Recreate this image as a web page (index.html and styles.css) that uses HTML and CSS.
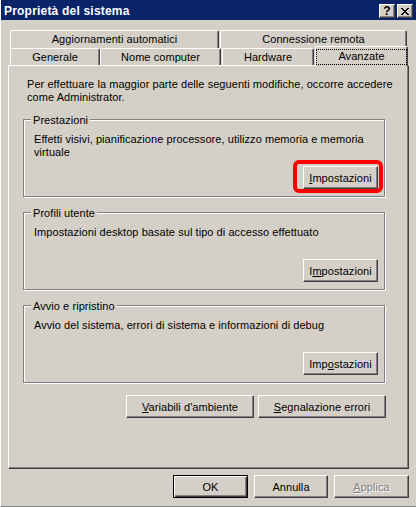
FILE: index.html
```html
<!DOCTYPE html>
<html lang="it">
<head>
    <meta charset="UTF-8">
    <title>Proprietà del sistema</title>
    <link rel="stylesheet" href="styles.css">
</head>
<body>
    <div class="window">
        <div class="titlebar">
            <span class="title">Proprietà del sistema</span>
            <div class="caption-buttons">
                <span class="cap-btn cap-help">?</span>
                <span class="cap-btn">
                    <svg width="8" height="7" viewBox="0 0 8 7" shape-rendering="crispEdges">
                        <path d="M0 0h2v1h1v1h2v-1h1v-1h2v1h-1v1h-1v1h-1v1h1v1h1v1h1v1h-2v-1h-1v-1h-2v1h-1v1h-2v-1h1v-1h1v-1h1v-1h-1v-1h-1v-1h-1z" fill="#000"/>
                    </svg>
                </span>
            </div>
        </div>

        <div class="tabs">
            <div class="tab-row back">
                <div class="tab tab-upd">Aggiornamenti automatici</div>
                <div class="tab tab-remote">Connessione remota</div>
            </div>
            <div class="tab-row front">
                <div class="tab tab-general">Generale</div>
                <div class="tab tab-name">Nome computer</div>
                <div class="tab tab-hw">Hardware</div>
                <div class="tab tab-adv active"><span class="focus">Avanzate</span></div>
            </div>
        </div>

        <div class="panel">
            <p class="intro">Per effettuare la maggior parte delle seguenti modifiche, occorre accedere<br>come Administrator.</p>

            <div class="group">
                <div class="group-title">Prestazioni</div>
                <p class="group-desc">Effetti visivi, pianificazione processore, utilizzo memoria e memoria<br>virtuale</p>
                <div class="group-actions">
                    <span class="hl-wrap">
                        <button class="btn"><u>I</u>mpostazioni</button>
                        <span class="highlight"></span>
                    </span>
                </div>
            </div>

            <div class="group">
                <div class="group-title">Profili utente</div>
                <p class="group-desc">Impostazioni desktop basate sul tipo di accesso effettuato</p>
                <div class="group-actions">
                    <button class="btn">I<u>m</u>postazioni</button>
                </div>
            </div>

            <div class="group">
                <div class="group-title">Avvio e ripristino</div>
                <p class="group-desc">Avvio del sistema, errori di sistema e informazioni di debug</p>
                <div class="group-actions">
                    <button class="btn">Imp<u>o</u>stazioni</button>
                </div>
            </div>

            <div class="panel-actions">
                <button class="btn wide"><u>V</u>ariabili d'ambiente</button>
                <button class="btn wide"><u>S</u>egnalazione errori</button>
            </div>
        </div>

        <div class="dialog-actions">
            <button class="btn default">OK</button>
            <button class="btn btn-cancel">Annulla</button>
            <button class="btn" disabled><u>A</u>pplica</button>
        </div>
    </div>
</body>
</html>
```
FILE: styles.css
```css
* {
    box-sizing: border-box;
}
body {
    margin: 0;
    background-color: #d4d0c8;
    font-family: "Liberation Sans", Arial, sans-serif;
    font-size: 11px;
    letter-spacing: 0.06px;
    color: #000;
}
.window {
    width: 416px;
    height: 507px;
    border-left: 1px solid #fff;
    border-bottom: 1px solid #808080;
    display: flex;
    flex-direction: column;
}

/* barra del titolo */
.titlebar {
    height: 20px;
    background-color: #0a246a;
    color: #fff;
    display: flex;
    align-items: center;
    justify-content: space-between;
    padding: 0 3px;
}
.title {
    font-weight: bold;
    font-size: 12px;
    letter-spacing: 0.2px;
    padding-top: 1px;
}
.caption-buttons {
    display: flex;
    gap: 2px;
    margin-top: 2px;
}
.cap-btn {
    width: 16px;
    height: 14px;
    background-color: #d4d0c8;
    border: 1px solid;
    border-color: #fff #404040 #404040 #fff;
    box-shadow: inset -1px -1px #808080;
    display: flex;
    align-items: center;
    justify-content: center;
    color: #000;
}
.cap-help {
    font-weight: bold;
    font-size: 12px;
    line-height: 12px;
}

/* schede */
.tabs {
    margin: 10px 0 0 9px;
}
.tab-row {
    display: flex;
}
.tab-row.back {
    height: 18px;
}
.tab-row.front {
    height: 17px;
    align-items: flex-end;
}
.tab {
    border: 1px solid #fff;
    border-bottom: 0;
    border-right-color: #404040;
    box-shadow: inset -1px 0 #808080;
    border-radius: 2px 2px 0 0;
    text-align: center;
    line-height: 13px;
    padding-top: 2px;
    white-space: nowrap;
    background-color: #d4d0c8;
}
.back .tab {
    height: 18px;
}
.front .tab {
    height: 17px;
}
.tab-upd { width: 209px; }
.tab-remote { width: 187px; margin-left: 1px; }
.tab-general { width: 90px; }
.tab-name { width: 121px; }
.tab-hw { width: 92px; margin-left: 1px; }
.tab-adv { width: 93px; margin-left: 1px; }
.tab.active {
    height: 20px;
    margin-bottom: -1px;
    padding-top: 0;
    position: relative;
    z-index: 1;
}
.focus {
    display: block;
    height: 16px;
    margin-top: 2px;
    border: 1px dotted #000;
    line-height: 12px;
}

/* pannello */
.panel {
    width: 401px;
    height: 404px;
    margin-left: 7px;
    border: 1px solid;
    border-color: #fff #404040 #404040 #fff;
    box-shadow: inset -1px -1px #808080;
    padding: 12px 0 0 14px;
}
.intro {
    margin: 0 0 0 4px;
    line-height: 13px;
    white-space: nowrap;
}
.group {
    width: 362px;
    margin-top: 15px;
    border: 1px solid #808080;
    box-shadow: inset 1px 1px #fff, 1px 1px #fff;
    padding: 0 6px 7px 10px;
}
.group-title {
    width: fit-content;
    margin: -6px 0 0 -3px;
    padding: 0 2px;
    line-height: 13px;
    background-color: #d4d0c8;
}
.group-desc {
    margin: 6px 0 0;
    height: 26px;
    line-height: 13px;
    white-space: nowrap;
}
.group-actions {
    display: flex;
    justify-content: flex-end;
    margin-top: 7px;
}
.hl-wrap {
    position: relative;
    display: inline-flex;
}
.highlight {
    position: absolute;
    left: -10px;
    top: -6px;
    right: -5px;
    bottom: -4px;
    border: 4px solid #f00;
    border-radius: 6px;
    pointer-events: none;
}
.panel-actions {
    width: 363px;
    display: flex;
    justify-content: flex-end;
    gap: 4px;
    margin-top: 12px;
}

/* pulsanti */
.btn {
    width: 75px;
    height: 23px;
    padding: 0;
    font: inherit;
    letter-spacing: inherit;
    color: #000;
    background-color: #d4d0c8;
    border: 1px solid;
    border-color: #fff #404040 #404040 #fff;
    box-shadow: inset -1px -1px #808080;
    border-radius: 0;
}
.btn.wide {
    width: 128px;
}
.btn-cancel {
    width: 74px;
}
.btn.default {
    border-color: #000;
    box-shadow: inset 1px 1px #fff, inset -1px -1px #404040, inset -2px -2px #808080;
}
.btn:disabled {
    color: #808080;
    text-shadow: 1px 1px #fff;
}
.dialog-actions {
    display: flex;
    justify-content: flex-end;
    gap: 6px;
    margin-top: 6px;
    padding-right: 7px;
}
```
